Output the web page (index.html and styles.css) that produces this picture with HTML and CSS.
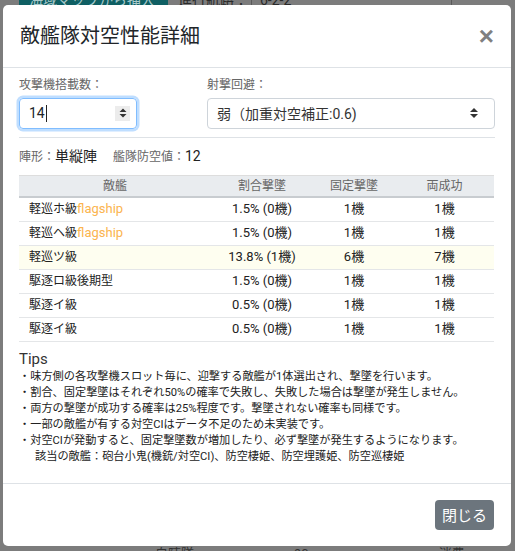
FILE: index.html
```html
<!DOCTYPE html>
<html lang="ja">
<head>
<meta charset="utf-8">
<link rel="stylesheet" href="styles.css">
</head>
<body>
<div class="page-top">
  <div class="bg-btn">海域マップから挿入</div>
  <div class="bg-label">進行航路：</div>
  <div class="bg-cell">6-2-2</div>
</div>
<div class="modal">
  <div class="modal-header">
    <h5 class="modal-title">敵艦隊対空性能詳細</h5>
    <span class="close">×</span>
  </div>
  <div class="modal-body">
    <div class="form-row">
      <div class="col-slots">
        <div class="label">攻撃機搭載数：</div>
        <div class="num-input">
          <span class="num-value">14</span><span class="caret"></span>
          <span class="spinner">
            <svg width="14" height="14" viewBox="0 0 14 14"><path d="M7 2.5 L10.5 6 L3.5 6 Z M3.5 8 L10.5 8 L7 11.5 Z" fill="#333"/></svg>
          </span>
        </div>
      </div>
      <div class="col-avoid">
        <div class="label">射撃回避：</div>
        <div class="select">
          <span>弱（加重対空補正:0.6)</span>
          <svg width="12" height="14" viewBox="0 0 12 14"><path d="M6 2 L10 6 L2 6 Z M2 8 L10 8 L6 12 Z" fill="#333"/></svg>
        </div>
      </div>
    </div>
    <hr class="sep">
    <div class="summary">
      <span class="sum-label">陣形：</span><span class="sum-value">単縦陣</span>
      <span class="sum-label sum-gap">艦隊防空値：</span><span class="sum-value">12</span>
    </div>
    <table class="aa-table">
      <colgroup>
        <col class="c1"><col class="c2"><col class="c3"><col class="c4">
      </colgroup>
      <thead>
        <tr><th>敵艦</th><th>割合撃墜</th><th>固定撃墜</th><th>両成功</th></tr>
      </thead>
      <tbody>
        <tr><td class="name">軽巡ホ級<span class="flag">flagship</span></td><td>1.5% (0機)</td><td>1機</td><td>1機</td></tr>
        <tr><td class="name">軽巡ヘ級<span class="flag">flagship</span></td><td>1.5% (0機)</td><td>1機</td><td>1機</td></tr>
        <tr class="hl"><td class="name">軽巡ツ級</td><td>13.8% (1機)</td><td>6機</td><td>7機</td></tr>
        <tr><td class="name">駆逐ロ級後期型</td><td>1.5% (0機)</td><td>1機</td><td>1機</td></tr>
        <tr><td class="name">駆逐イ級</td><td>0.5% (0機)</td><td>1機</td><td>1機</td></tr>
        <tr><td class="name">駆逐イ級</td><td>0.5% (0機)</td><td>1機</td><td>1機</td></tr>
      </tbody>
    </table>
    <div class="tips">
      <div class="tips-title">Tips</div>
      <div class="tip">・味方側の各攻撃機スロット毎に、迎撃する敵艦が1体選出され、撃墜を行います。</div>
      <div class="tip">・割合、固定撃墜はそれぞれ50%の確率で失敗し、失敗した場合は撃墜が発生しません。</div>
      <div class="tip">・両方の撃墜が成功する確率は25%程度です。撃墜されない確率も同様です。</div>
      <div class="tip">・一部の敵艦が有する対空CIはデータ不足のため未実装です。</div>
      <div class="tip">・対空CIが発動すると、固定撃墜数が増加したり、必ず撃墜が発生するようになります。</div>
      <div class="tip tip-indent">該当の敵艦：砲台小鬼(機銃/対空CI)、防空棲姫、防空埋護姫、防空巡棲姫</div>
    </div>
  </div>
  <div class="modal-footer">
    <button class="btn-close">閉じる</button>
  </div>
</div>
<div class="page-bottom">
  <span class="bb1">自陣隊</span><span class="bb2">90</span><span class="bb3">消費</span>
</div>
</body>
</html>
```

FILE: styles.css
```css
* { box-sizing: border-box; }
html, body {
  margin: 0;
  padding: 0;
}
body {
  width: 515px;
  height: 551px;
  overflow: hidden;
  background: #7c7c7c;
  font-family: Roboto, "Noto Sans CJK JP", sans-serif;
  color: #212529;
}
.page-top {
  height: 4.5px;
  display: flex;
  overflow: hidden;
  font-size: 14px;
  line-height: 18px;
  color: #2a2a2a;
}
.bg-btn {
  margin-left: 19px;
  width: 149px;
  background: #0f5f63;
  color: #a9c8ca;
  padding-left: 10px;
  margin-top: -9px;
  height: 22px;
}
.bg-label {
  margin-left: 10px;
  margin-top: -9px;
  width: 74px;
  border-right: 1px solid #5a5a5a;
}
.bg-cell {
  margin-top: -9px;
  padding-left: 8px;
  width: 200px;
  border-right: 1px solid #5a5a5a;
}
.modal {
  margin-left: 3px;
  width: 508px;
  height: 541px;
  background: #fff;
  border-radius: 5px;
  display: flex;
  flex-direction: column;
}
.modal-header {
  display: flex;
  justify-content: space-between;
  align-items: flex-start;
  padding: 16px 16px 16px 17px;
  border-bottom: 1px solid #dee2e6;
  height: 63px;
}
.modal-title {
  margin: 0;
  font-size: 20px;
  font-weight: 400;
  line-height: 30px;
  color: #212529;
}
.close {
  font-family: "Liberation Sans", Arial, sans-serif;
  font-size: 26px;
  font-weight: 700;
  line-height: 30px;
  color: #808080;
  margin-right: 1px;
}
.modal-body {
  padding: 7px 16px 0 16px;
  flex: 1;
}
.form-row {
  display: flex;
}
.col-slots {
  width: 188px;
}
.col-avoid {
  flex: 1;
}
.label {
  font-size: 12px;
  line-height: 20px;
  color: #666;
  margin-bottom: 3px;
}
.num-input {
  width: 118px;
  height: 31px;
  border: 1px solid #80bdff;
  border-radius: 4px;
  box-shadow: 0 0 0 2.5px rgba(0, 123, 255, 0.25);
  display: flex;
  align-items: center;
  padding-left: 9px;
  padding-right: 6px;
  font-size: 14px;
}
.num-value { line-height: 20px; }
.caret {
  width: 1px;
  height: 17px;
  background: #222;
  margin-left: 1px;
}
.spinner {
  margin-left: auto;
  width: 15px;
  height: 15px;
  background: #ececec;
  display: flex;
  align-items: center;
  justify-content: center;
}
.select {
  height: 31px;
  border: 1px solid #ced4da;
  border-radius: 4px;
  display: flex;
  align-items: center;
  justify-content: space-between;
  padding: 0 14px 0 9px;
  font-size: 14px;
  color: #333;
}
.sep {
  border: 0;
  border-top: 1px solid #dee2e6;
  margin: 8px 0 0 0;
}
.summary {
  margin-top: 8px;
  line-height: 20px;
  height: 22px;
}
.sum-label {
  font-size: 12px;
  color: #666;
}
.sum-value {
  font-size: 14px;
  color: #222;
}
.sum-gap { margin-left: 12px; }
.aa-table {
  margin-top: 7px;
  width: 475px;
  border-collapse: collapse;
  table-layout: fixed;
  font-size: 13px;
}
.c1 { width: 192px; }
.c2 { width: 102px; }
.c3 { width: 82px; }
.c4 { width: 99px; }
.aa-table th {
  background: #e9ecef;
  font-weight: 400;
  font-size: 12px;
  color: #666;
  height: 22px;
  padding: 0;
  border-top: 1px solid #ddd;
  border-bottom: 2px solid #c8ccd0;
  text-align: center;
  line-height: 18px;
}
.aa-table td {
  height: 24px;
  padding: 0;
  text-align: center;
  border-bottom: 1px solid #e4e6e8;
  line-height: 18px;
  color: #222;
}
.aa-table td.name {
  text-align: left;
  padding-left: 10px;
  font-size: 12px;
}
.flag {
  color: #fbb44f;
  font-size: 13px;
}
.hl td { background: #fefef0; }
.tips {
  margin-top: 7px;
}
.tips-title {
  font-size: 15px;
  line-height: 20px;
  color: #333;
}
.tip {
  font-size: 11.2px;
  line-height: 16px;
  color: #222;
  white-space: nowrap;
}
.tip-indent { padding-left: 16px; }
.modal-footer {
  border-top: 1px solid #dee2e6;
  padding: 16px 17px 16px 16px;
  display: flex;
  justify-content: flex-end;
  height: 63px;
}
.btn-close {
  width: 59px;
  height: 30px;
  background: #6c757d;
  color: #fff;
  border: 0;
  border-radius: 4px;
  font-family: Roboto, "Noto Sans CJK JP", sans-serif;
  font-size: 15px;
  padding: 0;
}
.page-bottom {
  height: 6px;
  overflow: hidden;
  font-size: 13px;
  line-height: 16px;
  color: #333;
  display: flex;
}
.bb1 { margin-left: 155px; }
.bb2 { margin-left: 100px; }
.bb3 { margin-left: 130px; }
```
